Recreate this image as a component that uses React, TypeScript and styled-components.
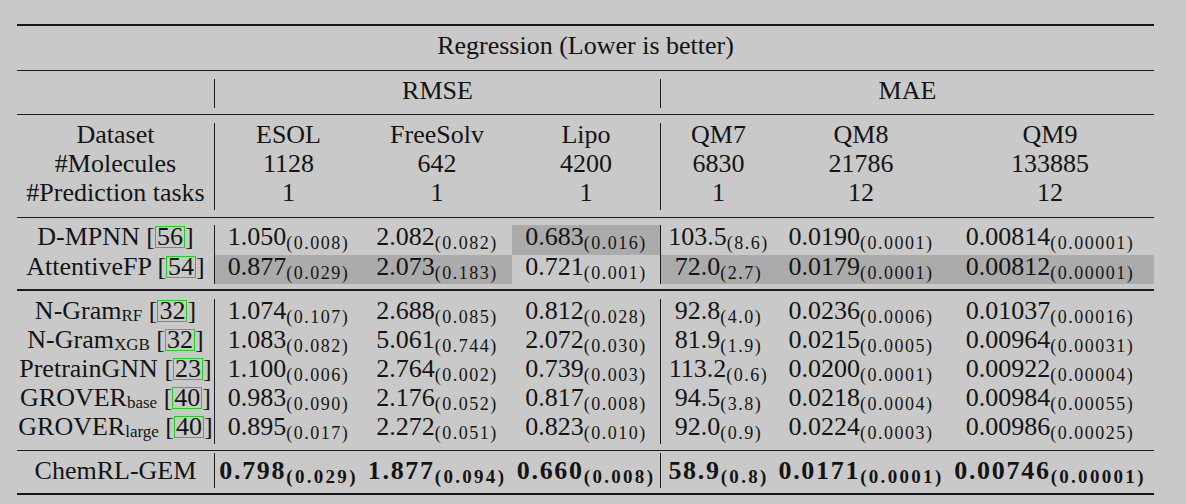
import React from "react";
import styled, { createGlobalStyle, css } from "styled-components";

const Global = createGlobalStyle`
  html, body {
    margin: 0;
    padding: 0;
    background: #c9c9c9;
  }
  body {
    font-family: "Liberation Serif", "Times New Roman", serif;
    color: #141414;
    overflow: hidden;
  }
`;

const Table = styled.div`
  margin: 24px 0 0 17px;
  width: 1137px;
  border-top: 2px solid #161616;
  border-bottom: 2px solid #161616;
`;

const Section = styled.div<{ $pt: number; $pb: number; $rule?: number }>`
  display: grid;
  grid-template-columns: 197px 148px 150px 148px 116px 170px 208px;
  padding: ${(p) => p.$pt}px 0 ${(p) => p.$pb}px;
  ${(p) =>
    p.$rule
      ? css`
          border-bottom: ${p.$rule}px solid #1c1c1c;
        `
      : ""}
`;

const Cell = styled.div<{
  $bar?: boolean;
  $shade?: boolean;
  $span?: number;
  $tall?: boolean;
  $h?: number;
}>`
  box-sizing: border-box;
  grid-column: span ${(p) => p.$span ?? 1};
  height: ${(p) => (p.$tall ? 35 : p.$h ?? 29)}px;
  padding-top: ${(p) => (p.$tall ? 6 : 0)}px;
  line-height: 24px;
  font-size: 26px;
  text-align: center;
  white-space: nowrap;
  border-left: ${(p) => (p.$bar ? "1px solid #1c1c1c" : "none")};
  background: ${(p) => (p.$shade ? "#ababab" : "transparent")};
`;

const Main = styled.span<{ $bold?: boolean }>`
  font-weight: ${(p) => (p.$bold ? 700 : 400)};
  letter-spacing: ${(p) => (p.$bold ? 1.7 : 0)}px;
`;

const Sub = styled.span<{ $bold?: boolean }>`
  font-size: ${(p) => (p.$bold ? 19 : 18)}px;
  font-weight: ${(p) => (p.$bold ? 700 : 400)};
  letter-spacing: ${(p) => (p.$bold ? 2.3 : 1.5)}px;
  vertical-align: -4px;
`;

const NameSub = styled.span`
  font-size: 17px;
  vertical-align: -2px;
`;

const CiteBox = styled.span`
  display: inline-block;
  height: 19px;
  line-height: 19px;
  padding: 0 1px 1px;
  border: 1.5px solid #14d614;
`;

type Val = [string, string];

interface Row {
  name: string;
  sub?: string;
  cite?: string;
  vals: Val[];
  shade?: number[];
}

const header: string[][] = [
  ["Dataset", "ESOL", "FreeSolv", "Lipo", "QM7", "QM8", "QM9"],
  ["#Molecules", "1128", "642", "4200", "6830", "21786", "133885"],
  ["#Prediction tasks", "1", "1", "1", "1", "12", "12"],
];

const block1: Row[] = [
  {
    name: "D-MPNN",
    cite: "56",
    vals: [
      ["1.050", "0.008"],
      ["2.082", "0.082"],
      ["0.683", "0.016"],
      ["103.5", "8.6"],
      ["0.0190", "0.0001"],
      ["0.00814", "0.00001"],
    ],
    shade: [2],
  },
  {
    name: "AttentiveFP",
    cite: "54",
    vals: [
      ["0.877", "0.029"],
      ["2.073", "0.183"],
      ["0.721", "0.001"],
      ["72.0", "2.7"],
      ["0.0179", "0.0001"],
      ["0.00812", "0.00001"],
    ],
    shade: [0, 1, 3, 4, 5],
  },
];

const block2: Row[] = [
  {
    name: "N-Gram",
    sub: "RF",
    cite: "32",
    vals: [
      ["1.074", "0.107"],
      ["2.688", "0.085"],
      ["0.812", "0.028"],
      ["92.8", "4.0"],
      ["0.0236", "0.0006"],
      ["0.01037", "0.00016"],
    ],
  },
  {
    name: "N-Gram",
    sub: "XGB",
    cite: "32",
    vals: [
      ["1.083", "0.082"],
      ["5.061", "0.744"],
      ["2.072", "0.030"],
      ["81.9", "1.9"],
      ["0.0215", "0.0005"],
      ["0.00964", "0.00031"],
    ],
  },
  {
    name: "PretrainGNN",
    cite: "23",
    vals: [
      ["1.100", "0.006"],
      ["2.764", "0.002"],
      ["0.739", "0.003"],
      ["113.2", "0.6"],
      ["0.0200", "0.0001"],
      ["0.00922", "0.00004"],
    ],
  },
  {
    name: "GROVER",
    sub: "base",
    cite: "40",
    vals: [
      ["0.983", "0.090"],
      ["2.176", "0.052"],
      ["0.817", "0.008"],
      ["94.5", "3.8"],
      ["0.0218", "0.0004"],
      ["0.00984", "0.00055"],
    ],
  },
  {
    name: "GROVER",
    sub: "large",
    cite: "40",
    vals: [
      ["0.895", "0.017"],
      ["2.272", "0.051"],
      ["0.823", "0.010"],
      ["92.0", "0.9"],
      ["0.0224", "0.0003"],
      ["0.00986", "0.00025"],
    ],
  },
];

const ours: Row = {
  name: "ChemRL-GEM",
  vals: [
    ["0.798", "0.029"],
    ["1.877", "0.094"],
    ["0.660", "0.008"],
    ["58.9", "0.8"],
    ["0.0171", "0.0001"],
    ["0.00746", "0.00001"],
  ],
};

const barAt = (i: number) => i === 0 || i === 3;

function DataRow({ row, bold, tall, h }: { row: Row; bold?: boolean; tall?: boolean; h?: number }) {
  return (
    <>
      <Cell $tall={tall} $h={h}>
        {row.name}
        {row.sub && <NameSub>{row.sub}</NameSub>}
        {row.cite && (
          <>
            {" "}[<CiteBox>{row.cite}</CiteBox>]
          </>
        )}
        {!row.cite && " "}
      </Cell>
      {row.vals.map(([v, s], i) => (
        <Cell key={i} $bar={barAt(i)} $shade={row.shade?.includes(i)} $tall={tall} $h={h}>
          <Main $bold={bold}>{v}</Main>
          <Sub $bold={bold}>({s})</Sub>
        </Cell>
      ))}
    </>
  );
}

export default function App() {
  return (
    <>
      <Global />
      <Table>
        <Section $pt={8} $pb={7} $rule={1}>
          <Cell $span={7}>Regression (Lower is better)</Cell>
        </Section>
        <Section $pt={8} $pb={6} $rule={1}>
          <Cell />
          <Cell $span={3} $bar>
            RMSE
          </Cell>
          <Cell $span={3} $bar>
            MAE
          </Cell>
        </Section>
        <Section $pt={8} $pb={7} $rule={1}>
          {header.map((r) =>
            r.map((t, i) => (
              <Cell key={r[0] + i} $bar={i === 1 || i === 4}>
                {t}
              </Cell>
            ))
          )}
        </Section>
        <Section $pt={7} $pb={5} $rule={2}>
          {block1.map((r) => (
            <DataRow key={r.name} row={r} h={29.5} />
          ))}
        </Section>
        <Section $pt={8} $pb={6} $rule={1}>
          {block2.map((r) => (
            <DataRow key={r.name + (r.sub ?? "")} row={r} />
          ))}
        </Section>
        <Section $pt={2} $pb={5}>
          <DataRow row={ours} bold tall />
        </Section>
      </Table>
    </>
  );
}
